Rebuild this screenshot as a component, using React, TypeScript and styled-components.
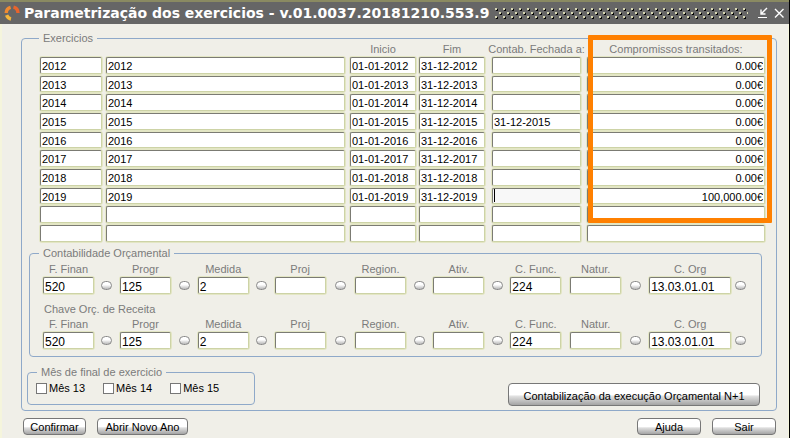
import React from "react";
import styled, { createGlobalStyle, css } from "styled-components";

const line = "#8fa9c9";
const surface = "#f0efe8";

const GlobalStyle = createGlobalStyle`
  * { box-sizing: border-box; }
  body {
    margin: 0;
    background: ${surface};
    font-family: "Liberation Sans", Arial, sans-serif;
    font-size: 11px;
    line-height: 14px;
    color: #000;
  }
  input, button { font: inherit; color: inherit; }
`;

const Window = styled.div`
  display: flex;
  flex-direction: column;
  min-height: 100vh;
  background: ${surface};
  border-right: 1px solid #000;
  border-bottom: 1px solid #fafae8;
`;

const TitleBar = styled.header`
  display: flex;
  align-items: center;
  height: 24px;
  padding: 0 2px 0 3px;
  border-top: 2px solid #8a8a62;
  background: #666;
  color: #fff;
`;

const Title = styled.h1`
  margin: 0 6px 0 2px;
  font: bold 14px/20px "DejaVu Sans", Verdana, sans-serif;
  white-space: nowrap;
`;

const Grip = styled.svg`
  flex: 1;
  min-width: 0;
  height: 12px;
  margin-right: 7px;
`;

const WindowButton = styled.button`
  display: flex;
  align-items: center;
  justify-content: center;
  width: 16px;
  height: 16px;
  padding: 0;
  border: 0;
  background: none;
  color: #fff;
`;

const Body = styled.main`
  flex: 1;
  padding: 7px 11px 3px 19px;
  border: solid #f5f5dc;
  border-width: 0 1px 0 2px;
`;

const Group = styled.fieldset`
  position: relative;
  min-width: 0;
  margin: 0;
  padding: 0;
  border: 1px solid ${line};
  border-radius: 4px;
`;

const Legend = styled.legend`
  padding: 0 4px;
  color: #7b7b7b;
`;

const MainGroup = styled(Group)`
  padding: 0 7px 4px 5px;
  & > ${Legend} { margin-left: 12px; }
`;

const Table = styled.table`
  width: calc(100% - 17px);
  margin: -3px 0 3px 13px;
  border-collapse: collapse;
  table-layout: fixed;
`;

const HeadCell = styled.th<{ $width?: number; $gap: number }>`
  width: ${(p) => (p.$width ? `${p.$width}px` : "auto")};
  height: 14px;
  padding: 0 ${(p) => p.$gap}px 0 0;
  font-weight: normal;
  color: #7b7b7b;
`;

const HeadText = styled.span`
  display: flex;
  justify-content: center;
  white-space: nowrap;
`;

const Row = styled.tr`
  --field: 17px;
  &:nth-child(3n + 2) { --field: 16px; }
`;

const Cell = styled.td<{ $gap: number }>`
  padding: 1px ${(p) => p.$gap}px 1px 0;
`;

const field = css`
  display: block;
  width: 100%;
  border: 1px solid #cdd3a6;
  border-top-color: #7b7b73;
  border-left-color: #7b7b73;
  border-radius: 2px;
  background: #fff;
  box-shadow: 0 0 0 1px #e3e6c4;
  outline: none;
`;

const TableInput = styled.input<{ $right?: boolean; $active?: boolean }>`
  ${field}
  height: var(--field);
  padding: 1px 1px 0;
  text-align: ${(p) => (p.$right ? "right" : "left")};
  ${(p) =>
    p.$active &&
    css`
      background: linear-gradient(#000, #000) 1px 0 / 1px 13px no-repeat #f8f8f8;
    `}
`;

const Highlight = styled.div`
  position: absolute;
  top: -10px;
  right: 4px;
  width: 184px;
  height: 188px;
  border: 5px solid #ff8000;
  border-radius: 1px;
  pointer-events: none;
`;

const BudgetGroup = styled(Group)`
  margin: 0 7px 0 2px;
  padding: 2px 12px 7px 13px;
  & > ${Legend} { margin-left: -4px; }
`;

const KeyGrid = styled.div`
  display: grid;
  grid-auto-flow: column;
  grid-template-rows: 14px 17px;
  grid-template-columns:
    51fr 26fr 51fr 27fr 51fr 26fr 51fr 29fr 52fr
    27fr 51fr 26fr 51fr 9fr 51fr 28fr 82fr 18fr;
  row-gap: 1px;
`;

const KeyLabel = styled.label`
  justify-self: center;
  color: #7b7b7b;
  white-space: nowrap;
`;

const KeyInput = styled.input`
  ${field}
  height: 17px;
  min-width: 0;
  padding: 2px 1px 0;
  font-size: 12px;
`;

const PickCell = styled.div`
  grid-row: 2;
  display: flex;
  align-items: center;
  justify-content: center;
`;

const PickButton = styled.button`
  width: 11px;
  height: 9px;
  padding: 0;
  border: 1px solid #8a8a8a;
  border-radius: 5px;
  background: linear-gradient(#fff 40%, #b8b8b8);
`;

const SubTitle = styled.div`
  margin: 8px 0 1px 1px;
  color: #7b7b7b;
`;

const Bottom = styled.div`
  display: flex;
  justify-content: space-between;
  align-items: flex-start;
  margin-top: 8px;
`;

const MonthGroup = styled(Group)`
  width: 228px;
  height: 40px;
  padding: 0 8px;
  & > ${Legend} { margin-left: 1px; }
`;

const Checks = styled.div`
  display: flex;
  gap: 18px;
  margin-top: 2px;
`;

const Check = styled.label`
  display: flex;
  align-items: center;
  gap: 2px;
`;

const CheckBox = styled.input`
  appearance: none;
  width: 11px;
  height: 11px;
  margin: 0;
  border: 1px solid #777;
  background: #fff;
  &:checked { background: #666; }
`;

const PushButton = styled.button<{ $width: number; $tall?: boolean }>`
  width: ${(p) => p.$width}px;
  height: ${(p) => (p.$tall ? 23 : 17)}px;
  padding: ${(p) => (p.$tall ? 2 : 1)}px 0 0;
  border: 1px solid #777;
  border-radius: 4px;
  background: linear-gradient(#fff 50%, #ddd 60%, #a4a4a4);
  white-space: nowrap;
`;

const ExecutionButton = styled(PushButton)`
  margin: 18px 9px 0 0;
`;

const Actions = styled.footer`
  display: flex;
  justify-content: space-between;
  margin: 7px 1px 0 2px;
`;

const ActionSet = styled.div`
  display: flex;
  gap: 11px;
`;

const columns = [
  { name: "Exercicio", title: "", width: 66, gap: 4 },
  { name: "Descrição", title: "", gap: 5 },
  { name: "Inicio", title: "Inicio", width: 69, gap: 3 },
  { name: "Fim", title: "Fim", width: 73, gap: 7 },
  { name: "Contab. Fechada a", title: "Contab. Fechada a:", width: 95, gap: 6 },
  { name: "Compromissos transitados", title: "Compromissos transitados:", width: 178, gap: 0 },
];

const years = [2012, 2013, 2014, 2015, 2016, 2017, 2018, 2019];

const rows: string[][] = [
  ...years.map((y) => [
    `${y}`,
    `${y}`,
    `01-01-${y}`,
    `31-12-${y}`,
    y === 2015 ? "31-12-2015" : "",
    y === 2019 ? "100,000.00€" : "0.00€",
  ]),
  ["", "", "", "", "", ""],
  ["", "", "", "", "", ""],
];

const keys = [
  { label: "F. Finan", value: "520", pick: true },
  { label: "Progr", value: "125", pick: true },
  { label: "Medida", value: "2", pick: true },
  { label: "Proj", value: "", pick: true },
  { label: "Region.", value: "", pick: true },
  { label: "Ativ.", value: "", pick: true },
  { label: "C. Func.", value: "224", pick: false },
  { label: "Natur.", value: "", pick: true },
  { label: "C. Org", value: "13.03.01.01", pick: true },
];

function BudgetKey({ prefix }: { prefix: string }) {
  return (
    <KeyGrid>
      {keys.map((k, i) => {
        const id = `${prefix}-${i}`;
        return (
          <React.Fragment key={id}>
            <KeyLabel htmlFor={id}>{k.label}</KeyLabel>
            <KeyInput id={id} defaultValue={k.value} />
            <PickCell>
              {k.pick && <PickButton type="button" aria-label={`Escolher ${k.label}`} />}
            </PickCell>
          </React.Fragment>
        );
      })}
    </KeyGrid>
  );
}

function Logo() {
  return (
    <svg width="19" height="18" viewBox="0 0 19 18" fill="none" strokeWidth="3.4" aria-hidden="true">
      <path d="M10.5 3.2A6 6 0 0 1 15 9" stroke="#e8642c" />
      <path d="M7.6 3.4A6 6 0 0 0 3.2 9" stroke="#f08a30" />
      <path d="M3.6 11.2A6 6 0 0 0 8 15" stroke="#f4b63c" />
    </svg>
  );
}

export default function App() {
  return (
    <>
      <GlobalStyle />
      <Window>
        <TitleBar>
          <Logo />
          <Title>Parametrização dos exercicios - v.01.0037.20181210.553.9</Title>
          <Grip aria-hidden="true" shapeRendering="crispEdges">
            <defs>
              <pattern id="bumps" y="1" width="8" height="8" patternUnits="userSpaceOnUse">
                <path d="M1 1h2v2h-2zM5 5h2v2h-2z" fill="#000" />
                <path d="M0 0h2v2h-2zM4 4h2v2h-2z" fill="#d8d8b4" />
              </pattern>
            </defs>
            <rect y="1" width="100%" height="11" fill="url(#bumps)" />
          </Grip>
          <WindowButton type="button" aria-label="Minimizar">
            <svg width="12" height="12" viewBox="0 0 12 12" fill="none" stroke="currentColor">
              <path d="M10 1L4.5 6.5M4 2.5V7H8.5" strokeWidth="1.4" />
              <path d="M1 10.5H10" />
            </svg>
          </WindowButton>
          <WindowButton type="button" aria-label="Fechar">
            <svg width="12" height="12" viewBox="0 0 12 12" stroke="currentColor" strokeWidth="1.4">
              <path d="M2 2L10.5 10.5M10.5 2L2 10.5" />
            </svg>
          </WindowButton>
        </TitleBar>
        <Body>
          <MainGroup>
            <Legend>Exercicios</Legend>
            <Table>
              <thead>
                <tr>
                  {columns.map((c) => (
                    <HeadCell key={c.name} $width={c.width} $gap={c.gap}>
                      <HeadText>{c.title}</HeadText>
                    </HeadCell>
                  ))}
                </tr>
              </thead>
              <tbody>
                {rows.map((row, r) => (
                  <Row key={r}>
                    {row.map((value, c) => (
                      <Cell key={c} $gap={columns[c].gap}>
                        <TableInput
                          aria-label={`${columns[c].name}, linha ${r + 1}`}
                          defaultValue={value}
                          $right={c === 5}
                          $active={r === 7 && c === 4}
                        />
                      </Cell>
                    ))}
                  </Row>
                ))}
              </tbody>
            </Table>
            <Highlight />
            <BudgetGroup>
              <Legend>Contabilidade Orçamental</Legend>
              <BudgetKey prefix="despesa" />
              <SubTitle>Chave Orç. de Receita</SubTitle>
              <BudgetKey prefix="receita" />
            </BudgetGroup>
            <Bottom>
              <MonthGroup>
                <Legend>Mês de final de exercicio</Legend>
                <Checks>
                  {["Mês 13", "Mês 14", "Mês 15"].map((m) => (
                    <Check key={m}>
                      <CheckBox type="checkbox" />
                      {m}
                    </Check>
                  ))}
                </Checks>
              </MonthGroup>
              <ExecutionButton type="button" $width={252} $tall>
                Contabilização da execução Orçamental N+1
              </ExecutionButton>
            </Bottom>
          </MainGroup>
          <Actions>
            <ActionSet>
              <PushButton type="button" $width={63}>Confirmar</PushButton>
              <PushButton type="button" $width={91}>Abrir Novo Ano</PushButton>
            </ActionSet>
            <ActionSet>
              <PushButton type="button" $width={64}>Ajuda</PushButton>
              <PushButton type="button" $width={64}>Sair</PushButton>
            </ActionSet>
          </Actions>
        </Body>
      </Window>
    </>
  );
}
